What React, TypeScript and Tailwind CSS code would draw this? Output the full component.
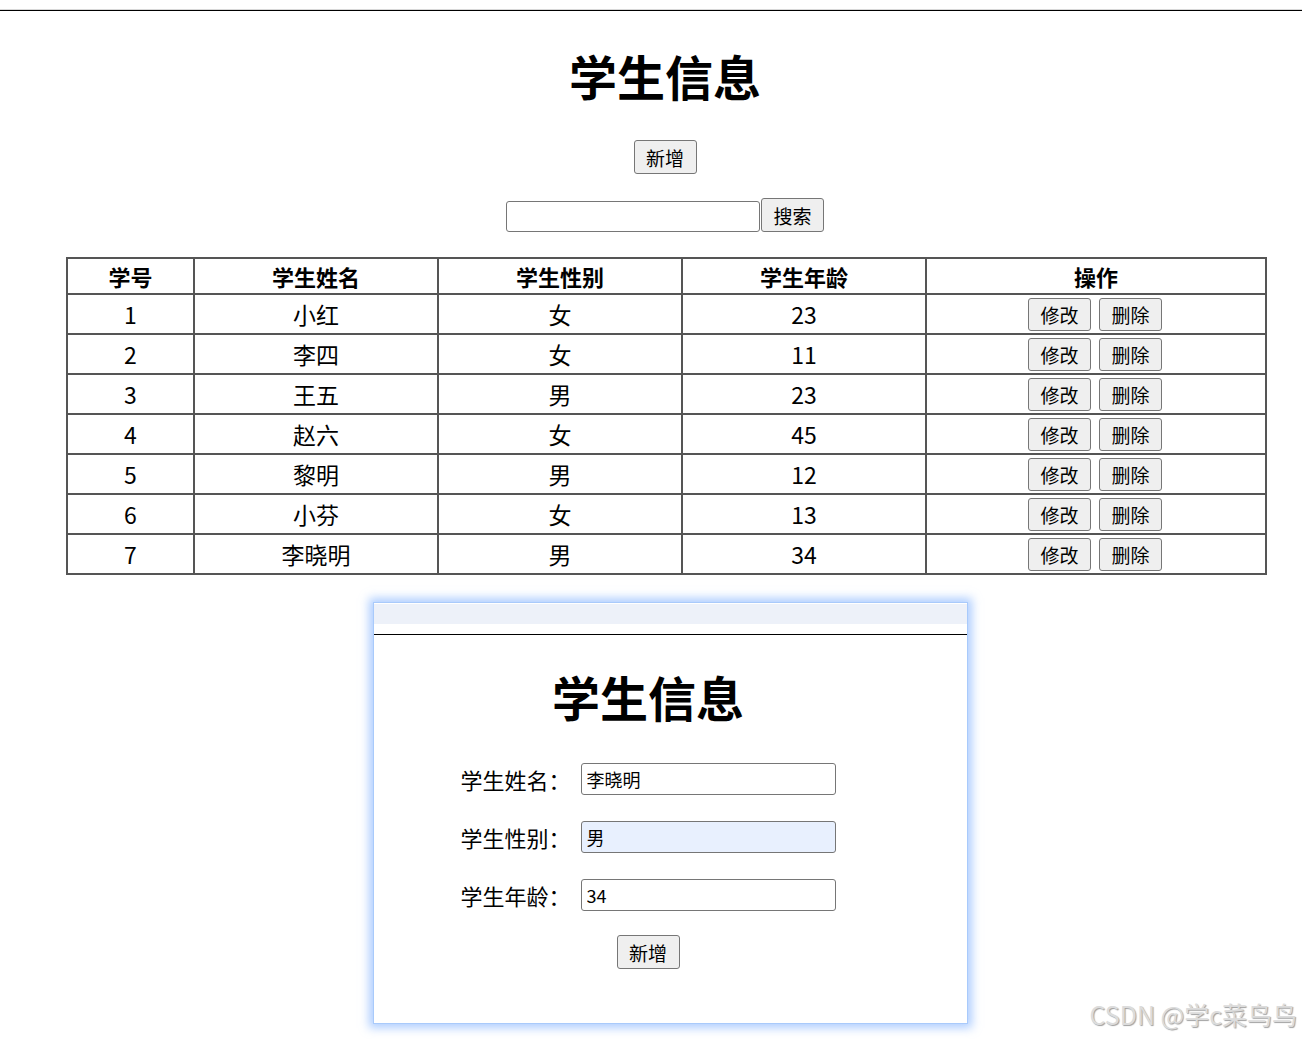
import React from "react";

type Student = { id: number; name: string; sex: string; age: number };

const students: Student[] = [
  { id: 1, name: "小红", sex: "女", age: 23 },
  { id: 2, name: "李四", sex: "女", age: 11 },
  { id: 3, name: "王五", sex: "男", age: 23 },
  { id: 4, name: "赵六", sex: "女", age: 45 },
  { id: 5, name: "黎明", sex: "男", age: 12 },
  { id: 6, name: "小芬", sex: "女", age: 13 },
  { id: 7, name: "李晓明", sex: "男", age: 34 },
];

const font = { fontFamily: '"Noto Sans CJK SC", "Noto Sans", sans-serif' };

function Btn({ children, className = "" }: { children: React.ReactNode; className?: string }) {
  return (
    <button
      className={`h-[33px] w-[63px] rounded-[3px] border border-[#767676] bg-[#efefef] text-[19px] leading-none text-black ${className}`}
    >
      {children}
    </button>
  );
}

export default function App() {
  return (
    <div className="relative min-h-[1039px] bg-white text-black" style={font}>
      <div className="h-[9px]" />
      <div className="h-px bg-[#d8d8d8]" />
      <div className="h-px bg-black" />

      {/* top block is centred a little right of the window centre */}
      <div className="pl-[28px]">
        <h1 className="mt-[35px] text-center text-[48px] font-bold leading-[58px]">学生信息</h1>

        <div className="mt-[36px] flex justify-center">
          <Btn className="h-[34px]">新增</Btn>
        </div>

        <div className="mt-[24px] flex items-end justify-center">
          <input className="h-[31px] w-[254px] rounded-[3px] border border-[#767676] bg-white" />
          <Btn className="ml-px h-[34px]">搜索</Btn>
        </div>
      </div>

      <table className="mt-[25px] ml-[66px] w-[1199px] table-fixed border-collapse border-2 border-[#555]">
        <colgroup>
          <col className="w-[127px]" />
          <col className="w-[244px]" />
          <col className="w-[244px]" />
          <col className="w-[244px]" />
          <col className="w-[340px]" />
        </colgroup>
        <thead>
          <tr className="h-[36px]">
            {["学号", "学生姓名", "学生性别", "学生年龄", "操作"].map((h) => (
              <th key={h} className="border-2 border-[#555] p-0 text-center text-[22px] font-bold leading-none">
                {h}
              </th>
            ))}
          </tr>
        </thead>
        <tbody>
          {students.map((s) => (
            <tr key={s.id} className="h-[40px]">
              <td className="border-2 border-[#555] p-0 text-center text-[23px] leading-none">{s.id}</td>
              <td className="border-2 border-[#555] p-0 text-center text-[23px] leading-none">{s.name}</td>
              <td className="border-2 border-[#555] p-0 text-center text-[23px] leading-none">{s.sex}</td>
              <td className="border-2 border-[#555] p-0 text-center text-[23px] leading-none">{s.age}</td>
              <td className="border-2 border-[#555] p-0">
                <div className="flex justify-center gap-[8px] pr-[2px]">
                  <Btn>修改</Btn>
                  <Btn>删除</Btn>
                </div>
              </td>
            </tr>
          ))}
        </tbody>
      </table>

      <div className="ml-[373px] mt-[27px] h-[422px] w-[595px] border border-[#a9cafb] bg-white shadow-[0_0_9px_4px_rgba(110,165,255,0.55)]">
        <div className="mt-px h-[20px] bg-[#edf1f9]" />
        <div className="h-[10px]" />
        <div className="h-px bg-black" />
        <div className="pr-[45px]">
          <h2 className="mt-[32px] text-center text-[48px] font-bold leading-[58px]">学生信息</h2>
          <div className="mt-[38px] flex flex-col items-center gap-[26px]">
            {[
              ["学生姓名：", "李晓明", false],
              ["学生性别：", "男", true],
              ["学生年龄：", "34", false],
            ].map(([label, val, filled]) => (
              <div key={label as string} className="flex items-center">
                <span className="w-[120px] text-[22px] leading-none">{label}</span>
                <input
                  readOnly
                  value={val as string}
                  className={`h-[32px] w-[255px] rounded-[3px] border border-[#767676] px-[5px] text-[18px] ${
                    filled ? "bg-[#e8f0fe]" : "bg-white"
                  }`}
                />
              </div>
            ))}
          </div>
          <div className="mt-[24px] flex justify-center">
            <Btn className="h-[34px]">新增</Btn>
          </div>
        </div>
      </div>

      <div
        className="absolute right-[5px] top-[1002px] text-[25px] leading-none text-[#dcdcdc]"
        style={{ textShadow: "1px 1px 1px #a0a0a0" }}
      >
        CSDN @学c菜鸟鸟
      </div>
    </div>
  );
}
